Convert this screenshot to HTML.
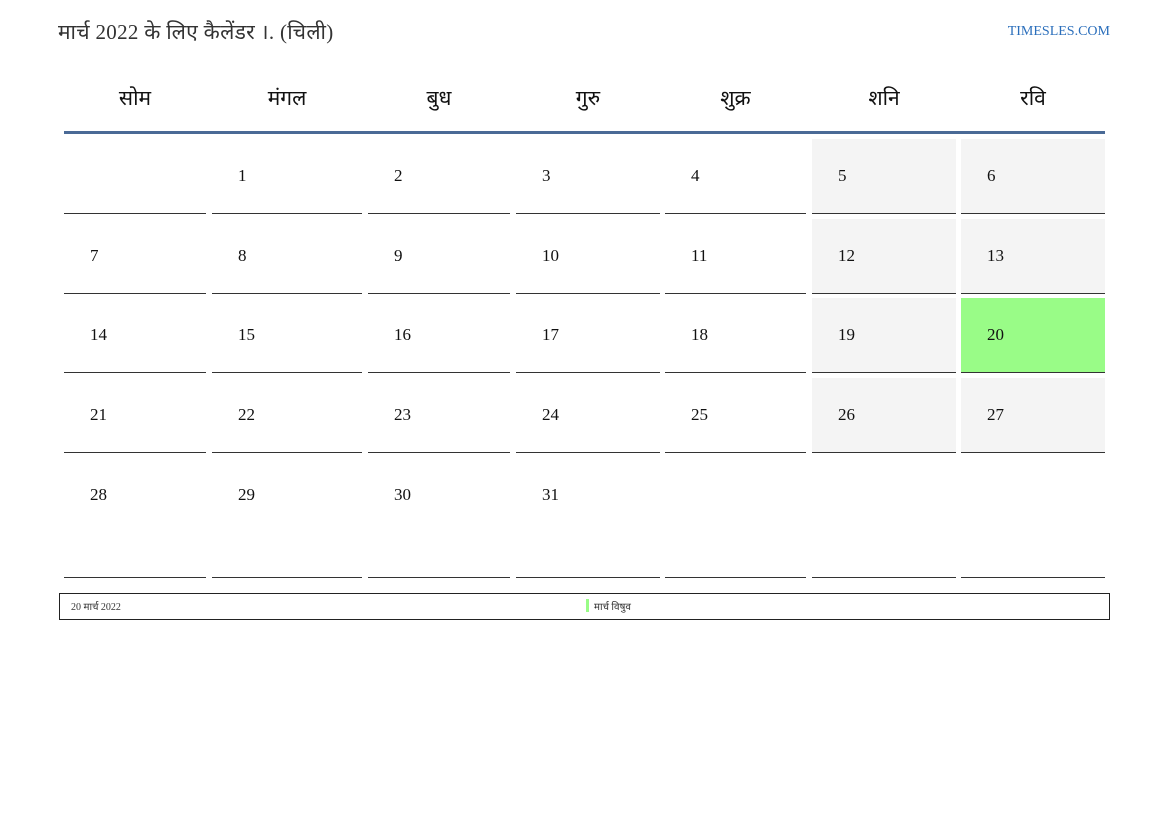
<!DOCTYPE html>
<html><head><meta charset="utf-8"><style>
body{margin:0;width:1169px;height:827px;background:#fff;position:relative;font-family:"Liberation Serif","DejaVu Serif",serif;overflow:hidden}
.a{position:absolute}
.t{left:58px;top:18px;font-size:21px;color:#333;letter-spacing:0.3px}
.site{right:59px;top:24px;font-size:14px;color:#2a6ebb}
.h{top:84px;font-size:21px;text-align:center;color:#111}
.blue{left:64px;top:131px;width:1041px;height:3px;background:#4a6a96}
.c{border-bottom:1px solid #333;box-sizing:border-box}
.g{background:#f4f4f4}
.gr{background:#99fc87}
.n{font-size:17px;color:#111;padding-left:26px}
.f{left:59px;top:593px;width:1051px;height:27px;border:1.5px solid #222;box-sizing:border-box;font-size:10px;color:#333}
</style></head><body>
<div class="a t">मार्च 2022 के लिए कैलेंडर ।. (चिली)</div>
<div class="a site">TIMESLES.COM</div>
<div id="hd"></div>
<div class="a blue"></div>
<div id="cal"></div>
<div class="a f"><span class="a" style="left:11px;top:5px">20 मार्च 2022</span><span class="a" style="left:526px;top:5px;width:3px;height:13px;background:#99fc87"></span><span class="a" style="left:534px;top:5px">मार्च विषुव</span></div>
<script>
var cols=[[64,206],[212,362],[368,510],[516,660],[665,806],[812,956],[961,1105]];
var names=["सोम","मंगल","बुध","गुरु","शुक्र","शनि","रवि"];
var h="";
cols.forEach(function(c,i){h+='<div class="a h" style="left:'+c[0]+'px;width:'+(c[1]-c[0])+'px">'+names[i]+'</div>';});
var rows=[[139,214],[219,294],[298,373],[378,453],[458,578]];
var d=-1;
rows.forEach(function(r,ri){cols.forEach(function(c,ci){d++;var day=d; var txt=(day>=1&&day<=31)?day:"";
var cls="a c"; if(ri<4&&ci>=5)cls+=" g"; if(day==20)cls+=" gr";
h+='<div class="'+cls+'" style="left:'+c[0]+'px;top:'+r[0]+'px;width:'+(c[1]-c[0])+'px;height:'+(r[1]-r[0])+'px"><div class="n" style="margin-top:27px">'+txt+'</div></div>';});});
document.getElementById("cal").innerHTML=h;
</script>
</body></html>
